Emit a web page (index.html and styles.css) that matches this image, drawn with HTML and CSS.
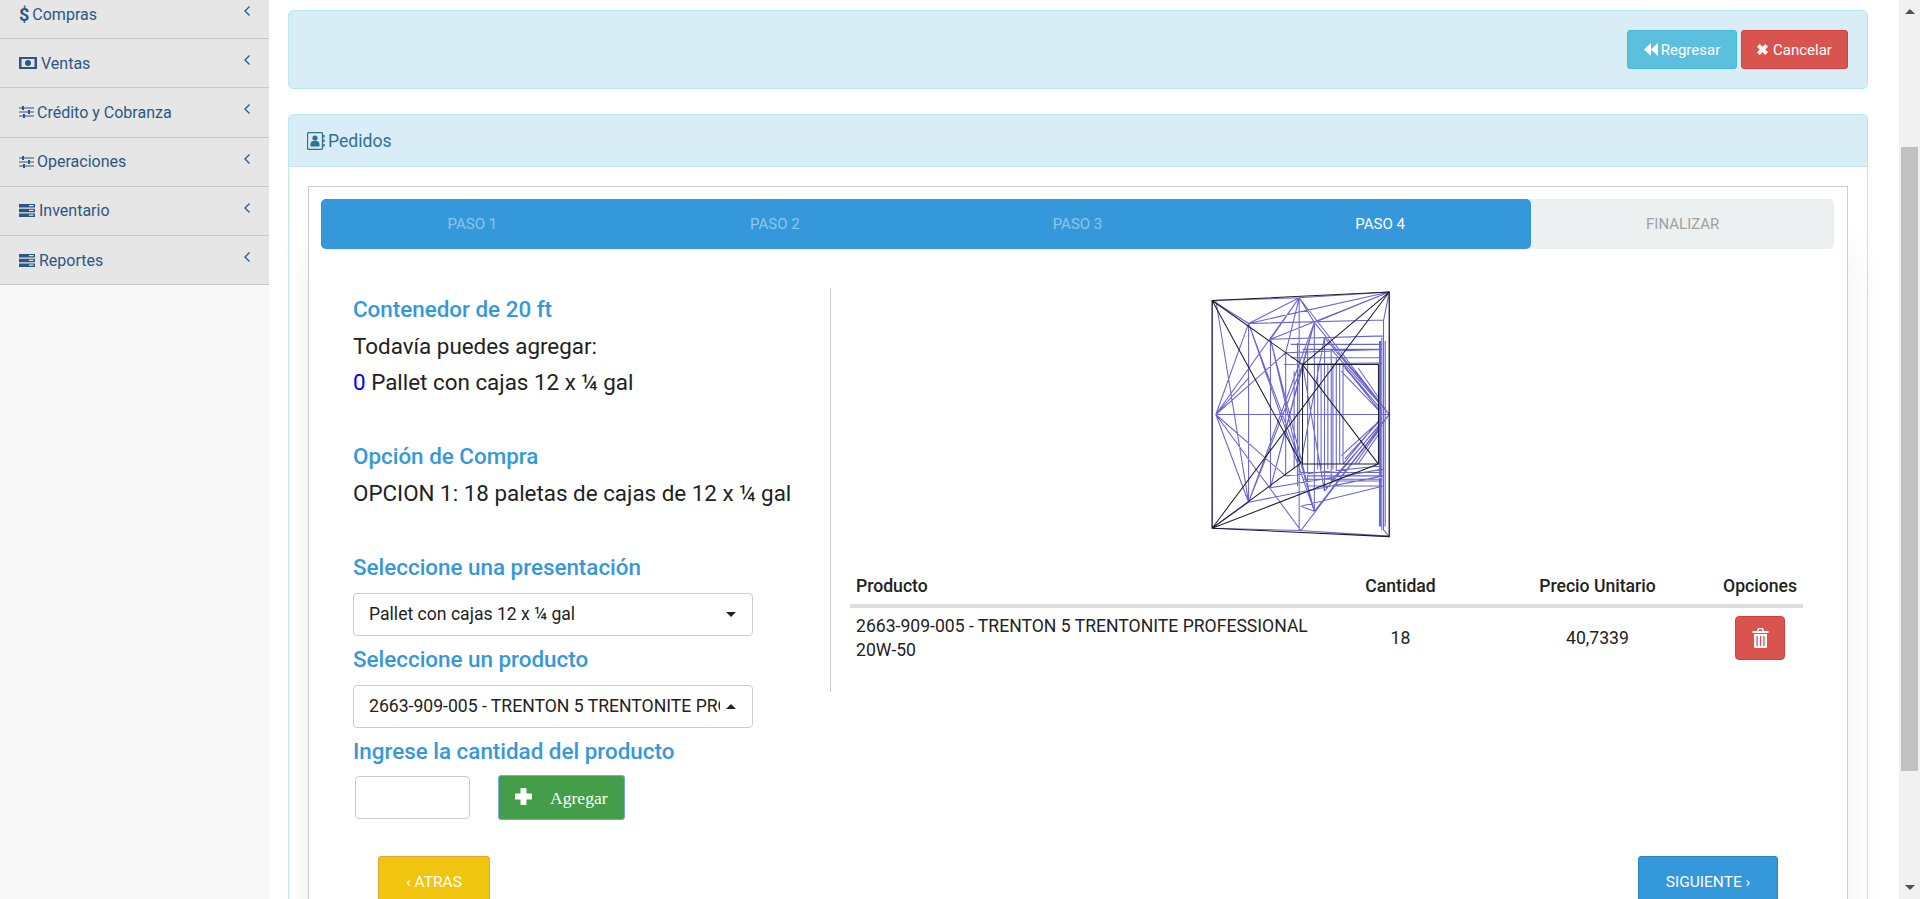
FILE: index.html
```html
<!DOCTYPE html>
<html lang="en">
<head>
  <meta charset="UTF-8" />
  <title>Pedidos</title>
  <link rel="stylesheet" href="styles.css">
</head>
<body>
  <div class="app">
    <aside class="sidebar">
      <ul class="menu">
        <li class="menu-item"><span class="menu-label"><b class="dollar">$</b> Compras</span><svg class="chev" viewBox="0 0 8 12"><path d="M6.500 1.500 2 6l4.500 4.500" /></svg></li>
        <li class="menu-item"><span class="menu-label"><svg class="ico ico-money" viewBox="0 0 18 12"><path fill-rule="evenodd" d="M0 0h18v12H0zM2.500 2v8h13V2zM9 3a3 3 0 1 1 0 6 3 3 0 0 1 0-6z"/><rect x="8.300" y="4.500" width="1.400" height="3"/></svg> Ventas</span><svg class="chev" viewBox="0 0 8 12"><path d="M6.500 1.500 2 6l4.500 4.500" /></svg></li>
        <li class="menu-item"><span class="menu-label"><svg class="ico ico-sliders" viewBox="0 0 15 12"><path d="M0 1.500h15v1H0zM0 5.500h15v1H0zM0 9.500h15v1H0z"/><path d="M3 0h2v4H3zM9 4h2v4H9zM4 8h2v4H4z"/></svg> Crédito y Cobranza</span><svg class="chev" viewBox="0 0 8 12"><path d="M6.500 1.500 2 6l4.500 4.500" /></svg></li>
        <li class="menu-item"><span class="menu-label"><svg class="ico ico-sliders" viewBox="0 0 15 12"><path d="M0 1.500h15v1H0zM0 5.500h15v1H0zM0 9.500h15v1H0z"/><path d="M3 0h2v4H3zM9 4h2v4H9zM4 8h2v4H4z"/></svg> Operaciones</span><svg class="chev" viewBox="0 0 8 12"><path d="M6.500 1.500 2 6l4.500 4.500" /></svg></li>
        <li class="menu-item"><span class="menu-label"><svg class="ico ico-server" viewBox="0 0 16 13"><path fill-rule="evenodd" d="M0 0h16v3.500H0zM10 1v1.200h4.500V1zM0 4.700h16v3.500H0zM10 5.800V7h4.500V5.800zM0 9.500h16V13H0zM10 10.600v1.200h4.500v-1.200z"/></svg> Inventario</span><svg class="chev" viewBox="0 0 8 12"><path d="M6.500 1.500 2 6l4.500 4.500" /></svg></li>
        <li class="menu-item"><span class="menu-label"><svg class="ico ico-server" viewBox="0 0 16 13"><path fill-rule="evenodd" d="M0 0h16v3.500H0zM10 1v1.200h4.500V1zM0 4.700h16v3.500H0zM10 5.800V7h4.500V5.800zM0 9.500h16V13H0zM10 10.600v1.200h4.500v-1.200z"/></svg> Reportes</span><svg class="chev" viewBox="0 0 8 12"><path d="M6.500 1.500 2 6l4.500 4.500" /></svg></li>
      </ul>
    </aside>

    <main class="content">
      <div class="toolbar">
        <button class="btn btn-info"><svg class="btn-ico" viewBox="0 0 14 13"><path d="M7 0v13L0 6.500zM14 0v13L7 6.500z"/></svg>Regresar</button>
        <button class="btn btn-danger"><svg class="btn-ico btn-ico-x" viewBox="0 0 12 12"><path d="M3 0 6 3l3-3 3 3-3 3 3 3-3 3-3-3-3 3-3-3 3-3-3-3z"/></svg>Cancelar</button>
      </div>

      <section class="panel">
        <div class="panel-head">
          <svg class="panel-ico" viewBox="0 0 18 18"><path fill="none" stroke="#31708f" stroke-width="1.300" d="M1.500.7h13a1 1 0 0 1 1 1v14.600a1 1 0 0 1-1 1h-13a1 1 0 0 1-1-1V1.700a1 1 0 0 1 1-1z"/><path d="M16.200 3h1.500v2.500h-1.500zM16.200 7.500h1.500V10h-1.500zM16.200 12h1.500v2.500h-1.500z"/><circle cx="8" cy="6" r="2.600"/><path d="M3.500 14.500v-2.300c0-2 1.500-3.200 2.700-3.200h3.600c1.200 0 2.700 1.200 2.700 3.200v2.300z"/></svg>
          Pedidos
        </div>
        <div class="panel-body">
          <div class="wizard">
            <ol class="steps">
              <li class="step done">Paso 1</li>
              <li class="step done">Paso 2</li>
              <li class="step done">Paso 3</li>
              <li class="step current">Paso 4</li>
              <li class="step todo">Finalizar</li>
            </ol>

            <div class="wizard-main">
              <div class="col-form">
                <h4 class="title title-first">Contenedor de 20 ft</h4>
                <p class="line">Todavía puedes agregar:</p>
                <p class="line"><span class="count">0</span> Pallet con cajas 12 x ¼ gal</p>

                <h4 class="title title-block">Opción de Compra</h4>
                <p class="line">OPCION 1: 18 paletas de cajas de 12 x ¼ gal</p>

                <h4 class="title title-block">Seleccione una presentación</h4>
                <div class="select">
                  <span class="select-text">Pallet con cajas 12 x ¼ gal</span>
                  <span class="caret"></span>
                </div>
                <h4 class="title title-next">Seleccione un producto</h4>
                <div class="select">
                  <span class="select-text">2663-909-005 - TRENTON 5 TRENTONITE PROFESSIONAL 20W-50</span>
                  <span class="caret caret-up"></span>
                </div>
                <h4 class="title title-next">Ingrese la cantidad del producto</h4>
                <div class="add-row">
                  <input class="qty" type="text" />
                  <button class="btn-add"><svg class="add-ico" viewBox="0 0 16 16"><path d="M6 0h4a.800.800 0 0 1 .800.800V5.200h4.400a.800.800 0 0 1 .800.800v4a.800.800 0 0 1-.800.800h-4.400v4.400a.800.800 0 0 1-.800.800H6a.800.800 0 0 1-.800-.800v-4.400H.800A.800.800 0 0 1 0 10V6a.800.800 0 0 1 .800-.800h4.400V.800A.800.800 0 0 1 6 0z"/></svg><span>Agregar</span></button>
                </div>
              </div>

              <div class="col-detail">
                <div class="figure">
                  <svg class="wire" viewBox="0 53 800 747">
                    <path class="wire-blue" d="M187 90 445 82 712 65M187 765 450 772 712 790M712 65V790M187 90V765M198 428H712M445 82 198 428 450 772M445 82 712 428 450 772M445 82V772M445 82 295 158M445 82 490 155M445 82 360 205M712 65 295 158M712 65 360 205M712 65 490 155M187 90 295 158V688L187 765M295 158 695 148M295 688 695 610M295 158 198 428M295 688 198 428M295 158 450 575M295 688 455 280M360 205V645M360 205 695 195M360 645 695 590M360 205 445 572M360 645 455 280M405 245V610M405 245 690 235M405 610 690 580M490 155V715M490 155 712 428M490 715 712 428M490 155 455 280M490 715 450 572M520 200V655M520 200 690 400M520 655 690 450M540 235V625M540 235H690M540 625H690M555 260V600M565 275V575M575 275V575M445 772 712 788M450 700 695 640M450 700 490 715M470 640H690M470 610H690M450 600H690M198 428 295 320M198 90 295 688M430 300V590M470 300V590M490 280V590M500 280V590M510 280V590M530 280V590M545 280V590M580 290 690 415M590 300 690 425M600 290 690 400M610 300 685 395M620 290 685 385M575 280 685 410M570 300 685 420M580 560 690 440M590 570 690 450M600 575 690 460M610 575 685 470M620 575 685 480M575 575 690 435M570 550 685 445M683 210V760M686 210V760M690 200V770M695 150V770M700 210V760M455 235H690M455 620H690M712 65 695 150M712 790 695 770M420 220H690M420 260H690M440 215V640M470 225V640M400 280 690 275M198 428 405 245M198 428 405 610M445 82 405 245M712 428 540 235M712 428 540 625M295 158 490 715M360 205 490 715M490 155 295 688M490 155 360 645M520 200 450 572M520 655 455 280"/>
                    <path class="wire-black" d="M187 90 712 65 712 790 187 765ZM187 90 455 280 680 575M187 90 450 572M187 765 712 65M187 765 680 575M187 765 450 572M712 65 455 280M455 280H680V575H455Z"/>
                  </svg>
                </div>
                <table class="orders">
                  <thead>
                    <tr><th class="c-prod">Producto</th><th class="c-qty">Cantidad</th><th class="c-price">Precio Unitario</th><th class="c-opt">Opciones</th></tr>
                  </thead>
                  <tbody>
                    <tr>
                      <td>2663-909-005 - TRENTON 5 TRENTONITE PROFESSIONAL 20W&#8209;50</td>
                      <td class="mid">18</td>
                      <td class="mid">40,7339</td>
                      <td class="mid"><button class="btn-trash"><svg class="trash-ico" viewBox="0 0 17 20"><path fill-rule="evenodd" d="M6 0h5l1 3h4.500v2H.500V3H5zM7 1.300 6.500 3h4L10 1.300zM2 6h13v12.500a1.500 1.500 0 0 1-1.500 1.500h-10A1.500 1.500 0 0 1 2 18.500zM4.500 8v10h1.300V8zM7.900 8v10h1.300V8zM11.300 8v10h1.300V8z"/></svg></button></td>
                    </tr>
                  </tbody>
                </table>
              </div>
            </div>

            <div class="wizard-nav">
              <button class="btn-back">‹ ATRAS</button>
              <button class="btn-next">SIGUIENTE ›</button>
            </div>
          </div>
        </div>
      </section>
    </main>

    <div class="scrollbar">
      <span class="sb-up"></span>
      <span class="sb-thumb"></span>
      <span class="sb-down"></span>
    </div>
  </div>
</body>
</html>
```

FILE: styles.css
```css
* {
  box-sizing: border-box;
}

html,
body {
  height: 100%;
  margin: 0;
  overflow: hidden;
}

body {
  font-family: Roboto, "Liberation Sans", sans-serif;
  font-size: 16px;
  color: #222;
  background-color: #fff;
}

.app {
  display: flex;
  height: 899px;
}

/* sidebar */
.sidebar {
  width: 269px;
  flex: none;
  background-color: #f8f8f8;
}

.menu {
  list-style: none;
  margin: -10px 0 0;
  padding: 0;
}

.menu-item {
  display: flex;
  justify-content: space-between;
  align-items: center;
  height: 49.2px;
  padding: 0 18px 0 19px;
  background-color: #e6e6e6;
  border-bottom: 1px solid #c8c8c8;
  color: #2c5784;
}

.menu-label {
  display: flex;
  align-items: center;
  gap: 4px;
  white-space: nowrap;
}

.dollar {
  font-weight: 700;
  font-size: 18px;
  margin-right: -1px;
}

.ico {
  display: block;
  fill: #2c5784;
}

.ico-money {
  width: 18px;
  height: 12px;
}

.ico-sliders {
  width: 15px;
  height: 12px;
  margin-right: -1px;
}

.ico-server {
  width: 16px;
  height: 13px;
}

.chev {
  width: 8px;
  height: 12px;
  margin-bottom: 6px;
  fill: none;
  stroke: #2c5784;
  stroke-width: 1.3;
}

/* main area */
.content {
  flex: 1;
  min-width: 0;
  padding: 10px 31px 0 19px;
}

.toolbar {
  display: flex;
  justify-content: flex-end;
  gap: 4px;
  height: 79px;
  padding: 19px 19px 0;
  background-color: #d9edf7;
  border: 1px solid #bce8f1;
  border-radius: 5px;
}

.btn {
  display: flex;
  align-items: center;
  justify-content: center;
  height: 39px;
  border-radius: 3px;
  font-family: Roboto, sans-serif;
  font-size: 15px;
  color: #fff;
}

.btn-info {
  width: 110px;
  background-color: #5bc0de;
  border: 1px solid #46b8da;
}

.btn-danger {
  width: 107px;
  background-color: #d9534f;
  border: 1px solid #d43f3a;
}

.btn-ico {
  width: 14px;
  height: 13px;
  margin-right: 3px;
  fill: #fff;
}

.btn-ico-x {
  width: 11px;
  height: 11px;
  margin-right: 5px;
}

.panel {
  margin-top: 25px;
  height: 800px;
  background-color: #fff;
  border: 1px solid #bce8f1;
  border-radius: 5px 5px 0 0;
}

.panel-head {
  display: flex;
  align-items: center;
  gap: 3px;
  height: 52px;
  padding: 0 18px;
  background-color: #d9edf7;
  border-bottom: 1px solid #bce8f1;
  font-size: 17.6px;
  color: #31708f;
}

.panel-ico {
  width: 18px;
  height: 18px;
  fill: #31708f;
}

.panel-body {
  padding: 19px 19px 0;
}

.wizard {
  height: 760px;
  padding: 12px 13px 0 12px;
  background-color: #fff;
  border: 1px solid #ccc;
  box-shadow: 0 60px 40px rgba(0, 0, 0, 0.06);
}

.steps {
  display: grid;
  grid-template-columns: repeat(5, 1fr);
  list-style: none;
  margin: 0;
  padding: 0;
  height: 50px;
  background-color: #ecf0f1;
  border-radius: 5px;
}

.step {
  display: flex;
  align-items: center;
  justify-content: center;
  font-size: 15px;
  text-transform: uppercase;
}

.step.done,
.step.current {
  background-color: #3498db;
}

.step.done {
  color: #8fc5ea;
}

.step.done:first-child {
  border-radius: 5px 0 0 5px;
}

.step.current {
  color: #fff;
  border-radius: 0 5px 5px 0;
}

.step.todo {
  color: #a0a0a0;
}

.wizard-main {
  display: flex;
  align-items: flex-start;
  height: 568px;
  margin-top: 39px;
}

.col-form {
  width: 510px;
  flex: none;
  height: 404px;
  padding: 8px 0 0 32px;
  border-right: 1px solid #ccc;
}

.title {
  margin: 0;
  font-size: 22.4px;
  font-weight: 500;
  line-height: 27px;
  color: #3498db;
}

.title-block {
  margin-top: 47px;
}

.title-next {
  margin-top: 10px;
}

.line {
  margin: 9.5px 0 0;
  font-size: 22.4px;
  line-height: 27px;
  white-space: nowrap;
}

.count {
  color: #00f;
}

.select {
  display: flex;
  align-items: center;
  justify-content: space-between;
  width: 400px;
  height: 43px;
  margin-top: 12px;
  padding: 0 16px 0 15px;
  background-color: #fff;
  border: 1px solid #ccc;
  border-radius: 4px;
  font-size: 17.6px;
}

.select-text {
  width: 351px;
  overflow: hidden;
  white-space: nowrap;
}

.caret {
  width: 0;
  height: 0;
  border-left: 5px solid transparent;
  border-right: 5px solid transparent;
  border-top: 5px solid #222;
}

.caret-up {
  border-top: 0;
  border-bottom: 5px solid #222;
}

.add-row {
  display: flex;
  align-items: center;
  margin-top: 10px;
  padding-left: 2px;
  gap: 28px;
}

.qty {
  width: 115px;
  height: 43px;
  padding: 0 8px;
  background-color: #fff;
  border: 1px solid #ccc;
  border-radius: 4px;
}

.btn-add {
  display: flex;
  align-items: center;
  width: 127px;
  height: 45px;
  padding: 2px 0 0 16px;
  background-color: #449d48;
  border: 1px solid #79a6e6;
  border-radius: 3px;
  font-family: "Liberation Serif", serif;
  font-size: 17.6px;
  color: #fff;
}

.add-ico {
  width: 17px;
  height: 17px;
  margin-right: 18px;
  margin-top: -3px;
  fill: #fff;
}

.col-detail {
  flex: 1;
  min-width: 0;
  padding-left: 19px;
}

.figure {
  height: 273px;
  padding-left: 299px;
}

.wire {
  display: block;
  width: 270px;
  height: 252px;
}

.wire-blue {
  fill: none;
  stroke: #6a66cf;
  stroke-width: 3.2;
}

.wire-black {
  fill: none;
  stroke: #1c1c2c;
  stroke-width: 3;
}

.orders {
  width: 953px;
  table-layout: fixed;
  border-collapse: collapse;
  font-size: 17.6px;
}

.orders th {
  height: 45px;
  padding: 7px 6px 0;
  font-weight: 500;
  text-align: center;
  border-bottom: 4px solid #ddd;
}

.orders th.c-prod {
  width: 473px;
  text-align: left;
}

.c-qty {
  width: 155px;
}

.c-price {
  width: 239px;
}

.orders th.c-opt {
  width: 86px;
  padding: 7px 0 0;
  white-space: nowrap;
}

.orders td {
  padding: 6px;
  line-height: 24px;
}

.orders .mid {
  text-align: center;
  vertical-align: middle;
}

.btn-trash {
  display: inline-flex;
  align-items: center;
  justify-content: center;
  width: 50px;
  height: 44px;
  padding: 0;
  background-color: #d9534f;
  border: 1px solid #d43f3a;
  border-radius: 4px;
}

.trash-ico {
  width: 17px;
  height: 20px;
  fill: #fff;
}

.wizard-nav {
  display: flex;
  justify-content: space-between;
  padding: 0 56px 0 57px;
}

.btn-back,
.btn-next {
  height: 52px;
  padding: 0;
  border-radius: 3px;
  font-family: Roboto, sans-serif;
  font-size: 15.5px;
  color: #fff;
}

.btn-back {
  width: 112px;
  background-color: #f1c40f;
  border: 1px solid #e7a33d;
}

.btn-next {
  width: 140px;
  background-color: #3498db;
  border: 1px solid #2e86c1;
}

/* window scrollbar */
.scrollbar {
  display: flex;
  flex-direction: column;
  align-items: center;
  width: 21px;
  flex: none;
  background-color: #f1f1f1;
}

.sb-up,
.sb-down {
  width: 0;
  height: 0;
  border-left: 5px solid transparent;
  border-right: 5px solid transparent;
}

.sb-up {
  margin-top: 9px;
  border-bottom: 5px solid #505050;
}

.sb-thumb {
  width: 17px;
  height: 624px;
  margin-top: 133px;
  background-color: #c1c1c1;
}

.sb-down {
  margin-top: 114px;
  border-top: 5px solid #505050;
}
```
